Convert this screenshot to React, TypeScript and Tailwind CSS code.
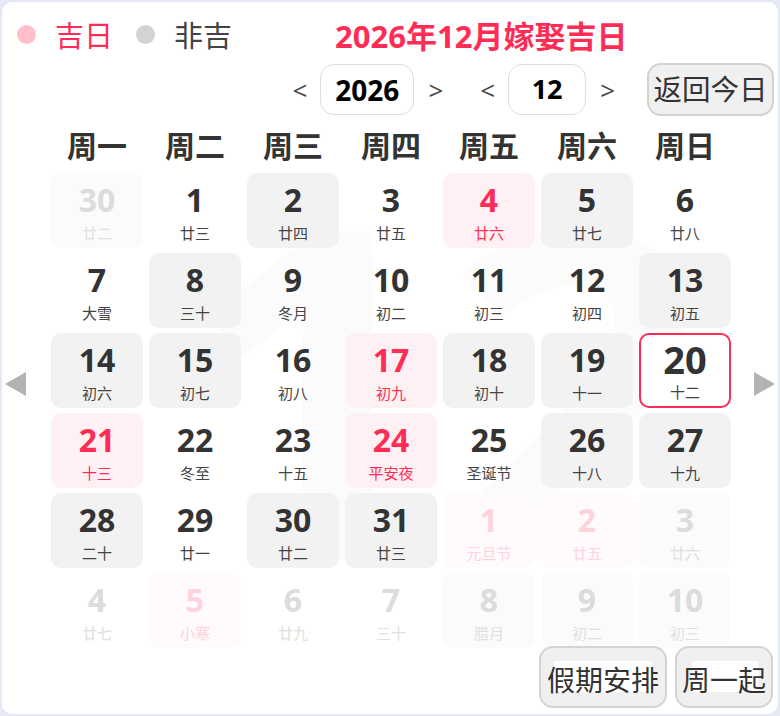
import React from "react";

type Cell = { d: number; l: string; t: "n" | "g" | "p" | "today"; o?: boolean };

const cells: Cell[] = [
  { d: 30, l: "廿二", t: "g", o: true },
  { d: 1, l: "廿三", t: "n" },
  { d: 2, l: "廿四", t: "g" },
  { d: 3, l: "廿五", t: "n" },
  { d: 4, l: "廿六", t: "p" },
  { d: 5, l: "廿七", t: "g" },
  { d: 6, l: "廿八", t: "n" },
  { d: 7, l: "大雪", t: "n" },
  { d: 8, l: "三十", t: "g" },
  { d: 9, l: "冬月", t: "n" },
  { d: 10, l: "初二", t: "n" },
  { d: 11, l: "初三", t: "n" },
  { d: 12, l: "初四", t: "n" },
  { d: 13, l: "初五", t: "g" },
  { d: 14, l: "初六", t: "g" },
  { d: 15, l: "初七", t: "g" },
  { d: 16, l: "初八", t: "n" },
  { d: 17, l: "初九", t: "p" },
  { d: 18, l: "初十", t: "g" },
  { d: 19, l: "十一", t: "g" },
  { d: 20, l: "十二", t: "today" },
  { d: 21, l: "十三", t: "p" },
  { d: 22, l: "冬至", t: "n" },
  { d: 23, l: "十五", t: "n" },
  { d: 24, l: "平安夜", t: "p" },
  { d: 25, l: "圣诞节", t: "n" },
  { d: 26, l: "十八", t: "g" },
  { d: 27, l: "十九", t: "g" },
  { d: 28, l: "二十", t: "g" },
  { d: 29, l: "廿一", t: "n" },
  { d: 30, l: "廿二", t: "g" },
  { d: 31, l: "廿三", t: "g" },
  { d: 1, l: "元旦节", t: "p", o: true },
  { d: 2, l: "廿五", t: "p", o: true },
  { d: 3, l: "廿六", t: "g", o: true },
  { d: 4, l: "廿七", t: "n", o: true },
  { d: 5, l: "小寒", t: "p", o: true },
  { d: 6, l: "廿九", t: "n", o: true },
  { d: 7, l: "三十", t: "n", o: true },
  { d: 8, l: "腊月", t: "g", o: true },
  { d: 9, l: "初二", t: "g", o: true },
  { d: 10, l: "初三", t: "g", o: true },
];

const weekdays = ["周一", "周二", "周三", "周四", "周五", "周六", "周日"];

function DayCell({ c }: { c: Cell }) {
  if (c.t === "today") {
    return (
      <div className="h-[75px] rounded-[10px] border-2 border-[#ff2d55] bg-white flex flex-col items-center pt-[4px]">
        <div className="text-[38px] leading-[40px] font-bold text-[#333333]">{c.d}</div>
        <div className="mt-[3px] text-[15px] leading-[20px] text-[#444444]">{c.l}</div>
      </div>
    );
  }
  let bg = "";
  let num = "text-[#333333]";
  let lun = "text-[#444444]";
  if (!c.o) {
    if (c.t === "g") bg = "bg-[#f2f2f2]";
    if (c.t === "p") {
      bg = "bg-[#fff0f3]";
      num = "text-[#ff2d55]";
      lun = "text-[#ff2d55]";
    }
  } else {
    num = "text-[#dcdcdc]";
    lun = "text-[#e0e0e0]";
    if (c.t === "g") bg = "bg-[#fbfbfb]";
    if (c.t === "p") {
      bg = "bg-[#fffafb]";
      num = "text-[#ffd3dc]";
      lun = "text-[#ffd3dc]";
    }
  }
  return (
    <div className={`h-[75px] rounded-[10px] flex flex-col items-center pt-[8px] ${bg}`}>
      <div className={`text-[32px] leading-[38px] font-bold ${num}`}>{c.d}</div>
      <div className={`mt-[4px] text-[15px] leading-[20px] ${lun}`}>{c.l}</div>
    </div>
  );
}

export default function App() {
  return (
    <div
      className="w-[780px] h-[716px] bg-[#e8ebf6]"
      style={{ fontFamily: '"Open Sans", "Noto Sans CJK SC", sans-serif' }}
    >
      <div className="relative w-[780px] h-[716px] border-2 border-[#e4e7f4] rounded-[12px] bg-white overflow-hidden flex flex-col">
        <div className="absolute left-[180px] top-[150px] text-[460px] leading-none font-bold text-[#000000] opacity-[0.01] select-none pointer-events-none">
          12
        </div>

        {/* top row */}
        <div className="relative flex items-center h-[44px] mt-[12px] pl-[15px]">
          <div className="w-[19px] h-[19px] rounded-full bg-[#ffc0cb] mb-[4px]"></div>
          <div className="ml-[19px] text-[29px] leading-[44px] text-[#ff2d55]">吉日</div>
          <div className="ml-[23px] w-[19px] h-[19px] rounded-full bg-[#d3d3d3] mb-[4px]"></div>
          <div className="ml-[19px] text-[29px] leading-[44px] text-[#444444]">非吉</div>
          <div className="ml-[103px] text-[31px] leading-[44px] font-bold text-[#ff2d55]">2026年12月嫁娶吉日</div>
        </div>

        {/* controls */}
        <div className="relative flex items-center justify-end h-[53px] mt-[5px] pr-[4px]">
          <span className="text-[26px] text-[#444444] leading-none">&lt;</span>
          <div className="ml-[13px] w-[94px] h-[51px] rounded-[14px] border border-[#dddddd] bg-white flex items-center justify-center text-[28px] font-bold text-black">
            2026
          </div>
          <span className="ml-[14px] text-[26px] text-[#444444] leading-none">&gt;</span>
          <span className="ml-[37px] text-[26px] text-[#444444] leading-none">&lt;</span>
          <div className="ml-[13px] w-[78px] h-[51px] rounded-[14px] border border-[#dddddd] bg-white flex items-center justify-center text-[27px] font-bold text-black">
            12
          </div>
          <span className="ml-[14px] text-[26px] text-[#444444] leading-none">&gt;</span>
          <div className="ml-[32px] w-[127px] h-[53px] rounded-[14px] border-2 border-[#d2d2d2] bg-[#f0f0f0] flex items-center justify-center text-[28.5px] text-[#333333]">
            返回今日
          </div>
        </div>

        {/* calendar body */}
        <div className="relative flex">
          <div className="w-[49px] flex justify-start pl-[3px] pt-[256px]">
            <div className="w-0 h-0 border-y-[12px] border-y-transparent border-r-[21px] border-r-[#b3b3b3]"></div>
          </div>
          <div className="w-[680px]">
            <div className="grid grid-cols-7 gap-x-[6px] h-[38px] mt-[11px]">
              {weekdays.map((w) => (
                <div key={w} className="flex items-center justify-center text-[30px] leading-[38px] font-bold text-[#333333]">
                  {w}
                </div>
              ))}
            </div>
            <div className="grid grid-cols-7 gap-x-[6px] gap-y-[5px] mt-[8px]">
              {cells.map((c, i) => (
                <DayCell key={i} c={c} />
              ))}
            </div>
          </div>
          <div className="flex-1 flex justify-end pr-[3px] pt-[256px]">
            <div className="w-0 h-0 border-y-[12px] border-y-transparent border-l-[21px] border-l-[#b3b3b3]"></div>
          </div>
        </div>

        {/* bottom buttons */}
        <div className="relative flex justify-end gap-[8px] pr-[5px] mt-[-2px]">
          <div className="relative w-[128px] h-[62px] rounded-[14px] border-2 border-[#d4d4d4] bg-[#f0f0f0] flex items-center justify-center">
            <div className="absolute left-[13px] top-[13px] w-[98px] h-[31px] bg-white"></div>
            <span className="relative text-[28px] leading-[40px] text-[#333333] mt-[6px]">假期安排</span>
          </div>
          <div className="relative w-[98px] h-[62px] rounded-[14px] border-2 border-[#d4d4d4] bg-[#f0f0f0] flex items-center justify-center">
            <div className="absolute left-[15px] top-[13px] w-[66px] h-[31px] bg-white"></div>
            <span className="relative text-[28px] leading-[40px] text-[#333333] mt-[6px]">周一起</span>
          </div>
        </div>
      </div>
    </div>
  );
}
